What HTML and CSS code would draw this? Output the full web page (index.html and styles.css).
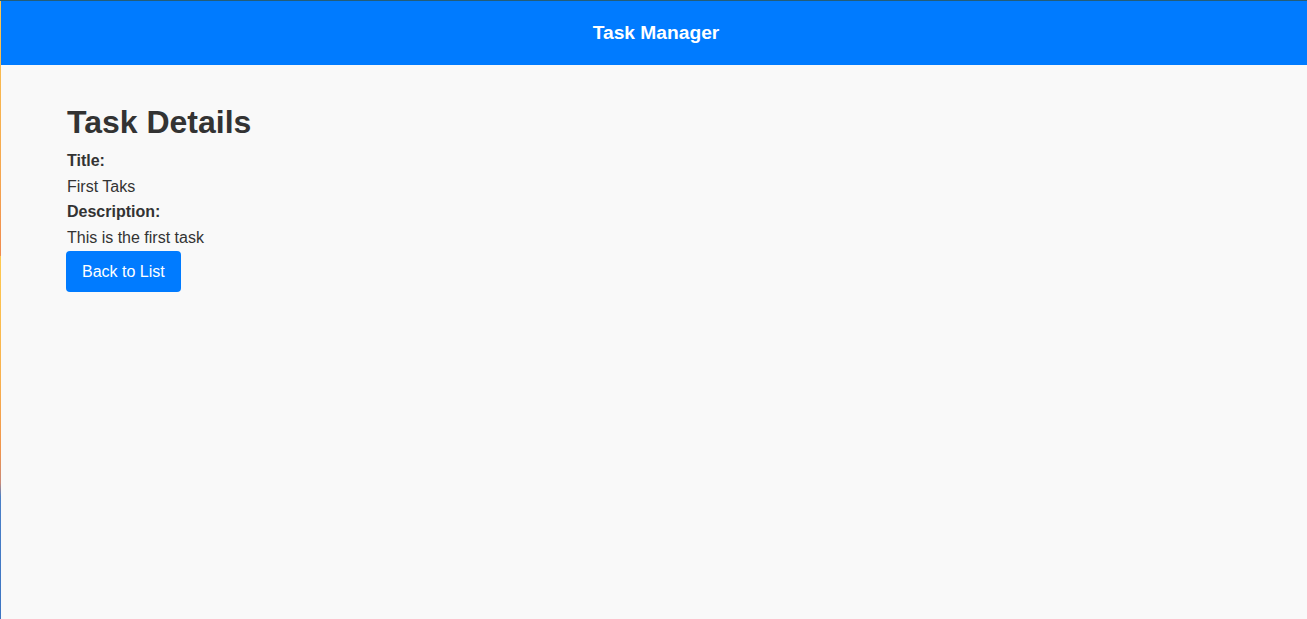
FILE: index.html
```html
<!DOCTYPE html>
<html lang="en">
<head>
<meta charset="utf-8">
<title>Task Manager</title>
<link rel="stylesheet" href="styles.css">
</head>
<body>
<div class="frame">
  <header class="app-header">
    <h2 class="app-title">Task Manager</h2>
  </header>
  <main class="content">
    <h1 class="page-title">Task Details</h1>
    <div class="field-label">Title:</div>
    <div class="field-value">First Taks</div>
    <div class="field-label">Description:</div>
    <div class="field-value">This is the first task</div>
    <button class="btn" type="button">Back to List</button>
  </main>
</div>
</body>
</html>
```
FILE: styles.css
```css
html, body {
  margin: 0;
  padding: 0;
  height: 100%;
}
body {
  background: #f9f9f9;
  color: #333333;
  font-family: "Liberation Sans", Arial, sans-serif;
  font-size: 16px;
  line-height: 1.6;
}
.frame {
  min-height: 100vh;
  box-sizing: border-box;
  border-top: 1px solid #235d79;
  border-left: 1px solid transparent;
  border-image: linear-gradient(to bottom,
      #235d79 0, #235d79 1px,
      #fcc850 1px, #f5a54f 180px, #f08a4e 255px,
      #fec94f 256px, #f8b04e 380px, #f0944c 450px,
      #c98a78 482px, #4a80c8 496px, #3c74c2 619px) 1;
  display: flex;
  flex-direction: column;
}
.app-header {
  background: #007bff;
  height: 64px;
  padding-left: 4px;
  display: flex;
  align-items: center;
  justify-content: center;
}
.app-title {
  margin: 0;
  color: #ffffff;
  font-size: 19.2px;
  font-weight: bold;
  line-height: 1;
}
.content {
  padding: 32px 66px;
  display: flex;
  flex-direction: column;
  align-items: flex-start;
}
.page-title {
  margin: 0;
  font-size: 32px;
  font-weight: bold;
  line-height: 1.6;
}
.field-label {
  font-weight: bold;
}
.btn {
  margin-left: -1px;
  background: #007bff;
  color: #ffffff;
  border: none;
  border-radius: 4px;
  padding: 8px 16px;
  font-family: inherit;
  font-size: 16px;
  line-height: 1.6;
  cursor: pointer;
}
```
